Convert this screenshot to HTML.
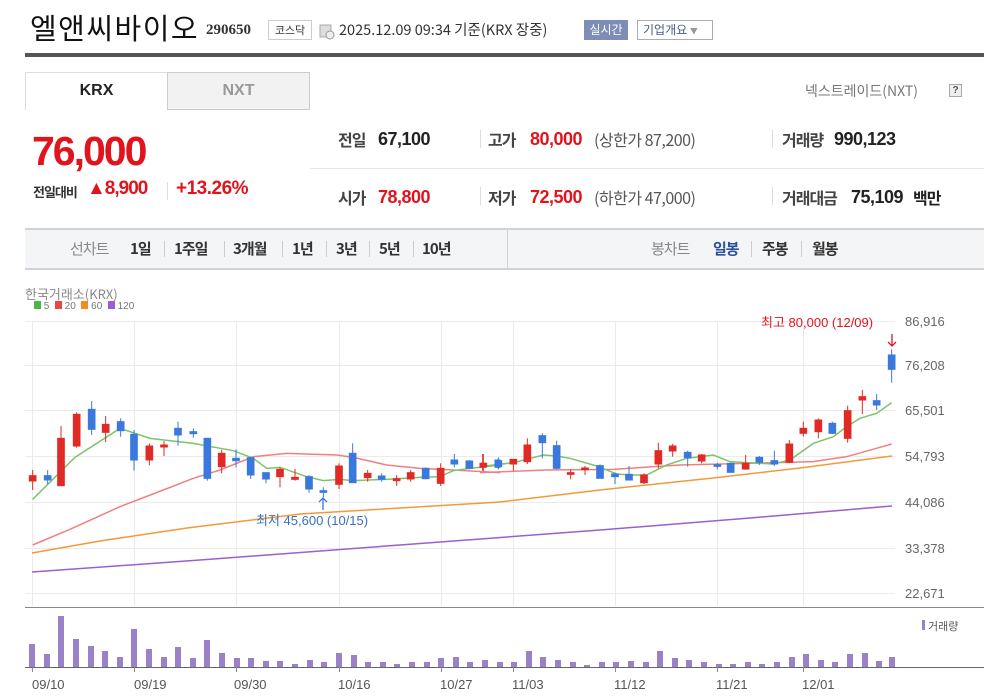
<!DOCTYPE html>
<html><head><meta charset="utf-8">
<style>
*{margin:0;padding:0;box-sizing:border-box}
body{width:984px;height:700px;background:#fff;font-family:"Liberation Sans","Noto Sans CJK KR",sans-serif;position:relative;overflow:hidden;color:#222}
.a{position:absolute;white-space:nowrap}
.r{color:#e1141e}
.k{font-family:"Noto Sans CJK KR","Liberation Sans",sans-serif}
.sep{position:absolute;width:1px;background:#ddd}
.lb{position:absolute;top:127px;font-size:16px;font-weight:bold;color:#444;letter-spacing:-1px;font-family:"Noto Sans CJK KR",sans-serif;white-space:nowrap}
.v{position:absolute;font-size:18px;font-weight:bold;letter-spacing:-0.5px;white-space:nowrap;font-family:"Liberation Sans",sans-serif}
.p{position:absolute;top:238px;font-size:15px;font-weight:bold;color:#333;letter-spacing:-1px;font-family:"Noto Sans CJK KR",sans-serif;white-space:nowrap}
.ps{position:absolute;top:241px;width:1px;height:16px;background:#ccc}
</style></head><body>
<div class="a k" style="left:30px;top:6px;font-size:29px;color:#111;letter-spacing:1.5px">엘앤씨바이오</div>
<div class="a" style="left:206px;top:22px;font-size:15px;font-weight:bold;font-family:'Liberation Serif',serif;color:#333">290650</div>
<div class="a k" style="left:268px;top:20px;width:44px;height:20px;border:1px solid #ccc;font-size:11px;line-height:18px;text-align:center;color:#333">코스닥</div>
<svg class="a" style="left:319px;top:24px" width="16" height="16"><rect x="1" y="1" width="11" height="12" fill="#ddd" stroke="#aaa"/><circle cx="11" cy="11" r="4" fill="#eee" stroke="#999"/></svg>
<div class="a k" style="left:339px;top:19px;font-size:14.5px;color:#333">2025.12.09 09:34 기준(KRX 장중)</div>
<div class="a k" style="left:584px;top:20px;width:44px;height:20px;background:#7d8db5;color:#fff;font-size:12px;line-height:20px;text-align:center">실시간</div>
<div class="a k" style="left:637px;top:20px;width:76px;height:20px;border:1px solid #aab;font-size:12px;line-height:18px;color:#4a5a86;padding-left:5px">기업개요 <span style="font-size:8px;color:#999">▼</span></div>
<div class="a" style="left:25px;top:53px;width:959px;height:4px;background:#555"></div>

<div class="a" style="left:25px;top:72px;width:143px;height:38px;border:1px solid #ddd;border-bottom:none;background:#fff;text-align:center;line-height:36px;font-weight:bold;font-size:16px">KRX</div>
<div class="a" style="left:167px;top:72px;width:143px;height:38px;border:1px solid #ccc;background:#f2f2f2;text-align:center;line-height:36px;font-weight:bold;font-size:16px;color:#999">NXT</div>
<div class="a k" style="left:805px;top:81px;font-size:14px;color:#777">넥스트레이드(NXT)</div>
<div class="a" style="left:949px;top:84px;width:13px;height:13px;border:1px solid #aaa;background:#eee;font-size:10px;line-height:11px;text-align:center;color:#555;font-weight:bold">?</div>

<div class="a r" style="left:32px;top:128px;font-size:41px;font-weight:bold;letter-spacing:-2px">76,000</div>
<div class="a k" style="left:33px;top:182px;font-size:13px;font-weight:bold;color:#333;letter-spacing:-1px">전일대비</div>
<div class="a r" style="left:87px;top:178px;font-size:19px;font-weight:bold;letter-spacing:-1px">▲8,900</div>
<div class="sep" style="left:167px;top:182px;height:18px"></div>
<div class="a r" style="left:176px;top:178px;font-size:19px;font-weight:bold;letter-spacing:-0.5px">+13.26%</div>

<div class="a" style="left:310px;top:168px;width:674px;height:1px;background:#e6e6e6"></div>
<div class="sep" style="left:480px;top:130px;height:18px"></div>
<div class="sep" style="left:772px;top:130px;height:18px"></div>
<div class="sep" style="left:480px;top:187px;height:18px"></div>
<div class="sep" style="left:772px;top:187px;height:18px"></div>

<div class="lb" style="left:338px">전일</div><div class="v" style="left:378px;top:129px;color:#222">67,100</div>
<div class="lb" style="left:488px">고가</div><div class="v r" style="left:530px;top:129px">80,000</div>
<div class="a" style="left:594px;top:127px;font-size:16px;color:#555;font-family:'Noto Sans CJK KR',sans-serif;letter-spacing:-0.5px">(상한가 87,200)</div>
<div class="lb" style="left:782px">거래량</div><div class="v" style="left:834px;top:129px;color:#222">990,123</div>

<div class="lb" style="left:338px;top:185px">시가</div><div class="v r" style="left:378px;top:187px">78,800</div>
<div class="lb" style="left:488px;top:185px">저가</div><div class="v r" style="left:530px;top:187px">72,500</div>
<div class="a" style="left:594px;top:185px;font-size:16px;color:#555;font-family:'Noto Sans CJK KR',sans-serif;letter-spacing:-0.5px">(하한가 47,000)</div>
<div class="lb" style="left:782px;top:185px">거래대금</div><div class="v" style="left:851px;top:187px;color:#222">75,109</div>
<div class="lb" style="left:913px;top:185px;color:#222">백만</div>

<div class="a" style="left:25px;top:228px;width:959px;height:42px;background:#f4f5f7;border-top:2px solid #cfd2d8;border-bottom:2px solid #cfd2d8"></div>
<div class="a" style="left:507px;top:230px;width:1px;height:38px;background:#cfd2d8"></div>
<div class="p" style="left:70px;color:#888;font-weight:normal">선차트</div>
<div class="p" style="left:130px">1일</div><div class="ps" style="left:164px"></div>
<div class="p" style="left:174px">1주일</div><div class="ps" style="left:224px"></div>
<div class="p" style="left:233px">3개월</div><div class="ps" style="left:282px"></div>
<div class="p" style="left:292px">1년</div><div class="ps" style="left:326px"></div>
<div class="p" style="left:336px">3년</div><div class="ps" style="left:369px"></div>
<div class="p" style="left:379px">5년</div><div class="ps" style="left:413px"></div>
<div class="p" style="left:422px">10년</div>
<div class="p" style="left:651px;color:#888;font-weight:normal">봉차트</div>
<div class="p" style="left:713px;color:#2c4fa0">일봉</div><div class="ps" style="left:751px"></div>
<div class="p" style="left:762px">주봉</div><div class="ps" style="left:801px"></div>
<div class="p" style="left:812px">월봉</div>

<div class="a k" style="left:25px;top:284px;font-size:13px;color:#888">한국거래소(KRX)</div>
<div class="a" style="left:34px;top:301px;font-size:10px;color:#777"><span style="display:inline-block;width:7px;height:8px;background:#4db34d"></span> 5 &nbsp;<span style="display:inline-block;width:7px;height:8px;background:#e44"></span> 20 &nbsp;<span style="display:inline-block;width:7px;height:8px;background:#f28c1e"></span> 60 &nbsp;<span style="display:inline-block;width:7px;height:8px;background:#9a5fd0"></span> 120</div>

<svg class="a" style="left:0;top:0" width="984" height="700">
<g stroke="#ebebeb" stroke-width="1">
<line x1="25" y1="321.5" x2="895" y2="321.5"/><line x1="25" y1="365.5" x2="895" y2="365.5"/><line x1="25" y1="410.5" x2="895" y2="410.5"/><line x1="25" y1="456.5" x2="895" y2="456.5"/><line x1="25" y1="502.5" x2="895" y2="502.5"/><line x1="25" y1="548.5" x2="895" y2="548.5"/><line x1="25" y1="593.5" x2="895" y2="593.5"/>
<line x1="32.5" y1="321" x2="32.5" y2="606"/><line x1="134.5" y1="321" x2="134.5" y2="606"/><line x1="236.5" y1="321" x2="236.5" y2="606"/><line x1="339.5" y1="321" x2="339.5" y2="606"/><line x1="441.5" y1="321" x2="441.5" y2="606"/><line x1="513.5" y1="321" x2="513.5" y2="606"/><line x1="615.5" y1="321" x2="615.5" y2="606"/><line x1="717.5" y1="321" x2="717.5" y2="606"/><line x1="803.5" y1="321" x2="803.5" y2="606"/>
</g>
<line x1="25" y1="607.5" x2="984" y2="607.5" stroke="#888"/>
<line x1="25" y1="667.5" x2="984" y2="667.5" stroke="#666"/>
<g fill="#666" font-size="13" font-family="Liberation Sans,sans-serif">
<text x="905" y="326">86,916</text><text x="905" y="370">76,208</text><text x="905" y="415">65,501</text><text x="905" y="461">54,793</text><text x="905" y="507">44,086</text><text x="905" y="553">33,378</text><text x="905" y="598">22,671</text>
</g>
<g fill="#555" font-size="13" font-family="Liberation Sans,sans-serif">
<text x="32" y="689">09/10</text><text x="134" y="689">09/19</text><text x="234" y="689">09/30</text><text x="338" y="689">10/16</text><text x="440" y="689">10/27</text><text x="512" y="689">11/03</text><text x="614" y="689">11/12</text><text x="716" y="689">11/21</text><text x="802" y="689">12/01</text>
</g>
<g stroke="#888"><line x1="32.5" y1="667" x2="32.5" y2="672"/><line x1="134.5" y1="667" x2="134.5" y2="672"/><line x1="236.5" y1="667" x2="236.5" y2="672"/><line x1="339.5" y1="667" x2="339.5" y2="672"/><line x1="441.5" y1="667" x2="441.5" y2="672"/><line x1="513.5" y1="667" x2="513.5" y2="672"/><line x1="615.5" y1="667" x2="615.5" y2="672"/><line x1="717.5" y1="667" x2="717.5" y2="672"/><line x1="803.5" y1="667" x2="803.5" y2="672"/></g>

<polyline fill="none" stroke="#9a5fd0" stroke-width="1.5" points="32,572 200,560 400,545 600,530 750,518 892,506"/>
<polyline fill="none" stroke="#f29a3a" stroke-width="1.5" points="32,553 100,541 187,528 300,514 400,508 500,502 600,490 713,478 800,468 892,456"/>
<g transform="translate(20,380) scale(0.33333)" fill="none" stroke-width="4.5">
<polyline stroke="#f08080" points="38,495 150,448 300,380 430,330 520,295 600,270 700,230 800,220 950,225 1000,232 1100,255 1200,265 1300,270 1440,278"/>
<polyline stroke="#7cc46a" points="38,358 165,232 300,145 390,175 520,190 640,212 700,235 740,265 780,262 860,290 910,302 960,298 1000,302 1100,298 1200,292 1260,290 1300,272 1350,265 1440,255"/>
</g>
<g transform="translate(480,310) scale(0.33333)" fill="none" stroke-width="4.5">
<polyline stroke="#f08080" points="0,488 200,480 400,478 600,465 800,460 1000,455 1100,440 1200,412 1235,402"/>
<polyline stroke="#7cc46a" points="0,470 100,458 190,435 230,438 270,445 350,468 410,492 450,495 500,495 560,465 620,445 700,435 750,455 800,458 880,462 930,450 1000,400 1060,380 1100,350 1140,325 1190,310 1235,278"/>
</g>

<g transform="translate(20,380) scale(0.33333)" stroke-width="3">
<g stroke="#e12a26" fill="#e12a26">
<line x1="38" y1="270" x2="38" y2="330"/><rect x="28" y="287" width="20" height="16"/>
<line x1="123" y1="138" x2="123" y2="317"/><rect x="113" y="175" width="20" height="142"/>
<line x1="170" y1="97" x2="170" y2="203"/><rect x="160" y="103" width="20" height="95"/>
<line x1="257" y1="108" x2="257" y2="186"/><rect x="247" y="133" width="20" height="24"/>
<line x1="388" y1="190" x2="388" y2="256"/><rect x="378" y="198" width="20" height="42"/>
<line x1="432" y1="183" x2="432" y2="228"/><rect x="422" y="195" width="20" height="6"/>
<line x1="605" y1="210" x2="605" y2="280"/><rect x="595" y="220" width="20" height="40"/>
<line x1="780" y1="262" x2="780" y2="322"/><rect x="770" y="268" width="20" height="22"/>
<line x1="825" y1="267" x2="825" y2="302"/><rect x="815" y="292" width="20" height="6"/>
<line x1="957" y1="250" x2="957" y2="327"/><rect x="947" y="258" width="20" height="55"/>
<line x1="1043" y1="270" x2="1043" y2="305"/><rect x="1033" y="280" width="20" height="13"/>
<line x1="1130" y1="285" x2="1130" y2="318"/><rect x="1120" y="296" width="20" height="6"/>
<line x1="1172" y1="270" x2="1172" y2="305"/><rect x="1162" y="278" width="20" height="19"/>
<line x1="1262" y1="250" x2="1262" y2="318"/><rect x="1252" y="265" width="20" height="45"/>
<line x1="1390" y1="222" x2="1390" y2="273"/><rect x="1380" y="250" width="20" height="10"/>
</g>
<g stroke="#3a78de" fill="#3a78de">
<line x1="83" y1="270" x2="83" y2="313"/><rect x="73" y="287" width="20" height="13"/>
<line x1="215" y1="63" x2="215" y2="165"/><rect x="205" y="88" width="20" height="60"/>
<line x1="302" y1="115" x2="302" y2="170"/><rect x="292" y="125" width="20" height="27"/>
<line x1="342" y1="150" x2="342" y2="272"/><rect x="332" y="163" width="20" height="77"/>
<line x1="474" y1="125" x2="474" y2="197"/><rect x="464" y="145" width="20" height="20"/>
<line x1="520" y1="145" x2="520" y2="173"/><rect x="510" y="155" width="20" height="6"/>
<line x1="562" y1="175" x2="562" y2="302"/><rect x="552" y="175" width="20" height="120"/>
<line x1="648" y1="208" x2="648" y2="262"/><rect x="638" y="235" width="20" height="7"/>
<line x1="692" y1="230" x2="692" y2="297"/><rect x="682" y="233" width="20" height="52"/>
<line x1="738" y1="278" x2="738" y2="310"/><rect x="728" y="278" width="20" height="19"/>
<line x1="867" y1="285" x2="867" y2="338"/><rect x="857" y="290" width="20" height="37"/>
<line x1="910" y1="322" x2="910" y2="352"/><rect x="900" y="332" width="20" height="5"/>
<line x1="998" y1="190" x2="998" y2="308"/><rect x="988" y="220" width="20" height="88"/>
<line x1="1085" y1="280" x2="1085" y2="305"/><rect x="1075" y="288" width="20" height="10"/>
<line x1="1217" y1="262" x2="1217" y2="298"/><rect x="1207" y="265" width="20" height="31"/>
<line x1="1303" y1="222" x2="1303" y2="262"/><rect x="1293" y="240" width="20" height="12"/>
<line x1="1348" y1="240" x2="1348" y2="268"/><rect x="1338" y="243" width="20" height="22"/>
<line x1="1435" y1="235" x2="1435" y2="268"/><rect x="1425" y="240" width="15" height="22"/>
</g>
</g>
<g transform="translate(480,310) scale(0.33333)" stroke-width="3">
<g stroke="#e12a26" fill="#e12a26">
<line x1="8" y1="432" x2="8" y2="482"/><rect x="0" y="460" width="18" height="12"/>
<line x1="100" y1="448" x2="100" y2="482"/><rect x="90" y="448" width="20" height="14"/>
<line x1="142" y1="385" x2="142" y2="462"/><rect x="132" y="405" width="20" height="50"/>
<line x1="272" y1="478" x2="272" y2="508"/><rect x="262" y="488" width="20" height="5"/>
<line x1="315" y1="468" x2="315" y2="495"/><rect x="305" y="474" width="20" height="5"/>
<line x1="492" y1="490" x2="492" y2="522"/><rect x="482" y="495" width="20" height="23"/>
<line x1="535" y1="398" x2="535" y2="475"/><rect x="525" y="422" width="20" height="40"/>
<line x1="578" y1="402" x2="578" y2="440"/><rect x="568" y="408" width="20" height="15"/>
<line x1="665" y1="432" x2="665" y2="460"/><rect x="655" y="435" width="20" height="18"/>
<line x1="797" y1="435" x2="797" y2="480"/><rect x="787" y="460" width="20" height="17"/>
<line x1="928" y1="390" x2="928" y2="460"/><rect x="918" y="402" width="20" height="55"/>
<line x1="970" y1="335" x2="970" y2="380"/><rect x="960" y="355" width="20" height="15"/>
<line x1="1015" y1="325" x2="1015" y2="385"/><rect x="1005" y="330" width="20" height="35"/>
<line x1="1103" y1="287" x2="1103" y2="398"/><rect x="1093" y="302" width="20" height="83"/>
<line x1="1147" y1="240" x2="1147" y2="312"/><rect x="1137" y="260" width="20" height="10"/>
</g>
<g stroke="#3a78de" fill="#3a78de">
<line x1="55" y1="442" x2="55" y2="478"/><rect x="45" y="452" width="20" height="18"/>
<line x1="187" y1="370" x2="187" y2="445"/><rect x="177" y="377" width="20" height="21"/>
<line x1="230" y1="392" x2="230" y2="478"/><rect x="220" y="407" width="20" height="68"/>
<line x1="360" y1="463" x2="360" y2="505"/><rect x="350" y="467" width="20" height="38"/>
<line x1="405" y1="488" x2="405" y2="522"/><rect x="395" y="492" width="20" height="8"/>
<line x1="447" y1="468" x2="447" y2="512"/><rect x="437" y="493" width="20" height="17"/>
<line x1="623" y1="422" x2="623" y2="470"/><rect x="613" y="427" width="20" height="16"/>
<line x1="712" y1="458" x2="712" y2="478"/><rect x="702" y="464" width="20" height="5"/>
<line x1="752" y1="458" x2="752" y2="488"/><rect x="742" y="460" width="20" height="27"/>
<line x1="838" y1="438" x2="838" y2="465"/><rect x="828" y="442" width="20" height="15"/>
<line x1="883" y1="422" x2="883" y2="468"/><rect x="873" y="452" width="20" height="10"/>
<line x1="1057" y1="335" x2="1057" y2="372"/><rect x="1047" y="340" width="20" height="30"/>
<line x1="1190" y1="252" x2="1190" y2="300"/><rect x="1180" y="272" width="20" height="13"/>
<line x1="1235" y1="118" x2="1235" y2="218"/><rect x="1225" y="135" width="20" height="43"/>
</g>
</g>
<text x="761" y="327" fill="#e1141e" font-size="13" font-family="Liberation Sans,Noto Sans CJK KR,sans-serif">최고 80,000 (12/09)</text>
<path d="M892 334 V346 M888 342 L892 346 L896 342" stroke="#e1141e" fill="none" stroke-width="1.3"/>
<path d="M323 510 V498 M319 502 L323 498 L327 502" stroke="#3a78de" fill="none" stroke-width="1.3"/>
<text x="256" y="525" fill="#3a6fc0" font-size="13" font-family="Liberation Sans,Noto Sans CJK KR,sans-serif">최저 45,600 (10/15)</text>

<g fill="#9a82c8">
<rect x="29" y="644" width="6" height="23"/><rect x="44" y="654" width="6" height="13"/><rect x="58" y="616" width="6" height="51"/><rect x="73" y="639" width="6" height="28"/><rect x="88" y="646" width="6" height="21"/><rect x="102" y="651" width="6" height="16"/><rect x="117" y="657" width="6" height="10"/><rect x="131" y="629" width="6" height="38"/><rect x="146" y="649" width="6" height="18"/><rect x="161" y="657" width="6" height="10"/><rect x="175" y="647" width="6" height="20"/><rect x="190" y="658" width="6" height="9"/><rect x="204" y="640" width="6" height="27"/><rect x="219" y="653" width="6" height="14"/><rect x="234" y="658" width="6" height="9"/><rect x="248" y="658" width="6" height="9"/><rect x="263" y="661" width="6" height="6"/><rect x="277" y="661" width="6" height="6"/><rect x="292" y="664" width="6" height="3"/><rect x="307" y="660" width="6" height="7"/><rect x="321" y="662" width="6" height="5"/><rect x="336" y="653" width="6" height="14"/><rect x="351" y="655" width="6" height="12"/><rect x="365" y="662" width="6" height="5"/><rect x="380" y="662" width="6" height="5"/><rect x="394" y="664" width="6" height="3"/><rect x="409" y="662" width="6" height="5"/><rect x="424" y="662" width="6" height="5"/><rect x="438" y="658" width="6" height="9"/><rect x="453" y="657" width="6" height="10"/><rect x="467" y="662" width="6" height="5"/><rect x="482" y="660" width="6" height="7"/><rect x="497" y="662" width="6" height="5"/><rect x="511" y="662" width="6" height="5"/><rect x="526" y="651" width="6" height="16"/><rect x="540" y="657" width="6" height="10"/><rect x="555" y="660" width="6" height="7"/><rect x="570" y="662" width="6" height="5"/><rect x="584" y="665" width="6" height="2"/><rect x="599" y="662" width="6" height="5"/><rect x="613" y="662" width="6" height="5"/><rect x="628" y="661" width="6" height="6"/><rect x="643" y="662" width="6" height="5"/><rect x="657" y="651" width="6" height="16"/><rect x="672" y="658" width="6" height="9"/><rect x="686" y="660" width="6" height="7"/><rect x="701" y="662" width="6" height="5"/><rect x="716" y="664" width="6" height="3"/><rect x="730" y="664" width="6" height="3"/><rect x="745" y="662" width="6" height="5"/><rect x="759" y="664" width="6" height="3"/><rect x="774" y="662" width="6" height="5"/><rect x="789" y="657" width="6" height="10"/><rect x="803" y="654" width="6" height="13"/><rect x="818" y="660" width="6" height="7"/><rect x="832" y="662" width="6" height="5"/><rect x="847" y="654" width="6" height="13"/><rect x="862" y="653" width="6" height="14"/><rect x="876" y="661" width="6" height="6"/><rect x="889" y="657" width="6" height="10"/>
<rect x="922" y="620" width="3" height="10"/>
</g>
<text x="928" y="630" fill="#555" font-size="11" font-family="Noto Sans CJK KR,sans-serif">거래량</text>
</svg>
</body></html>
